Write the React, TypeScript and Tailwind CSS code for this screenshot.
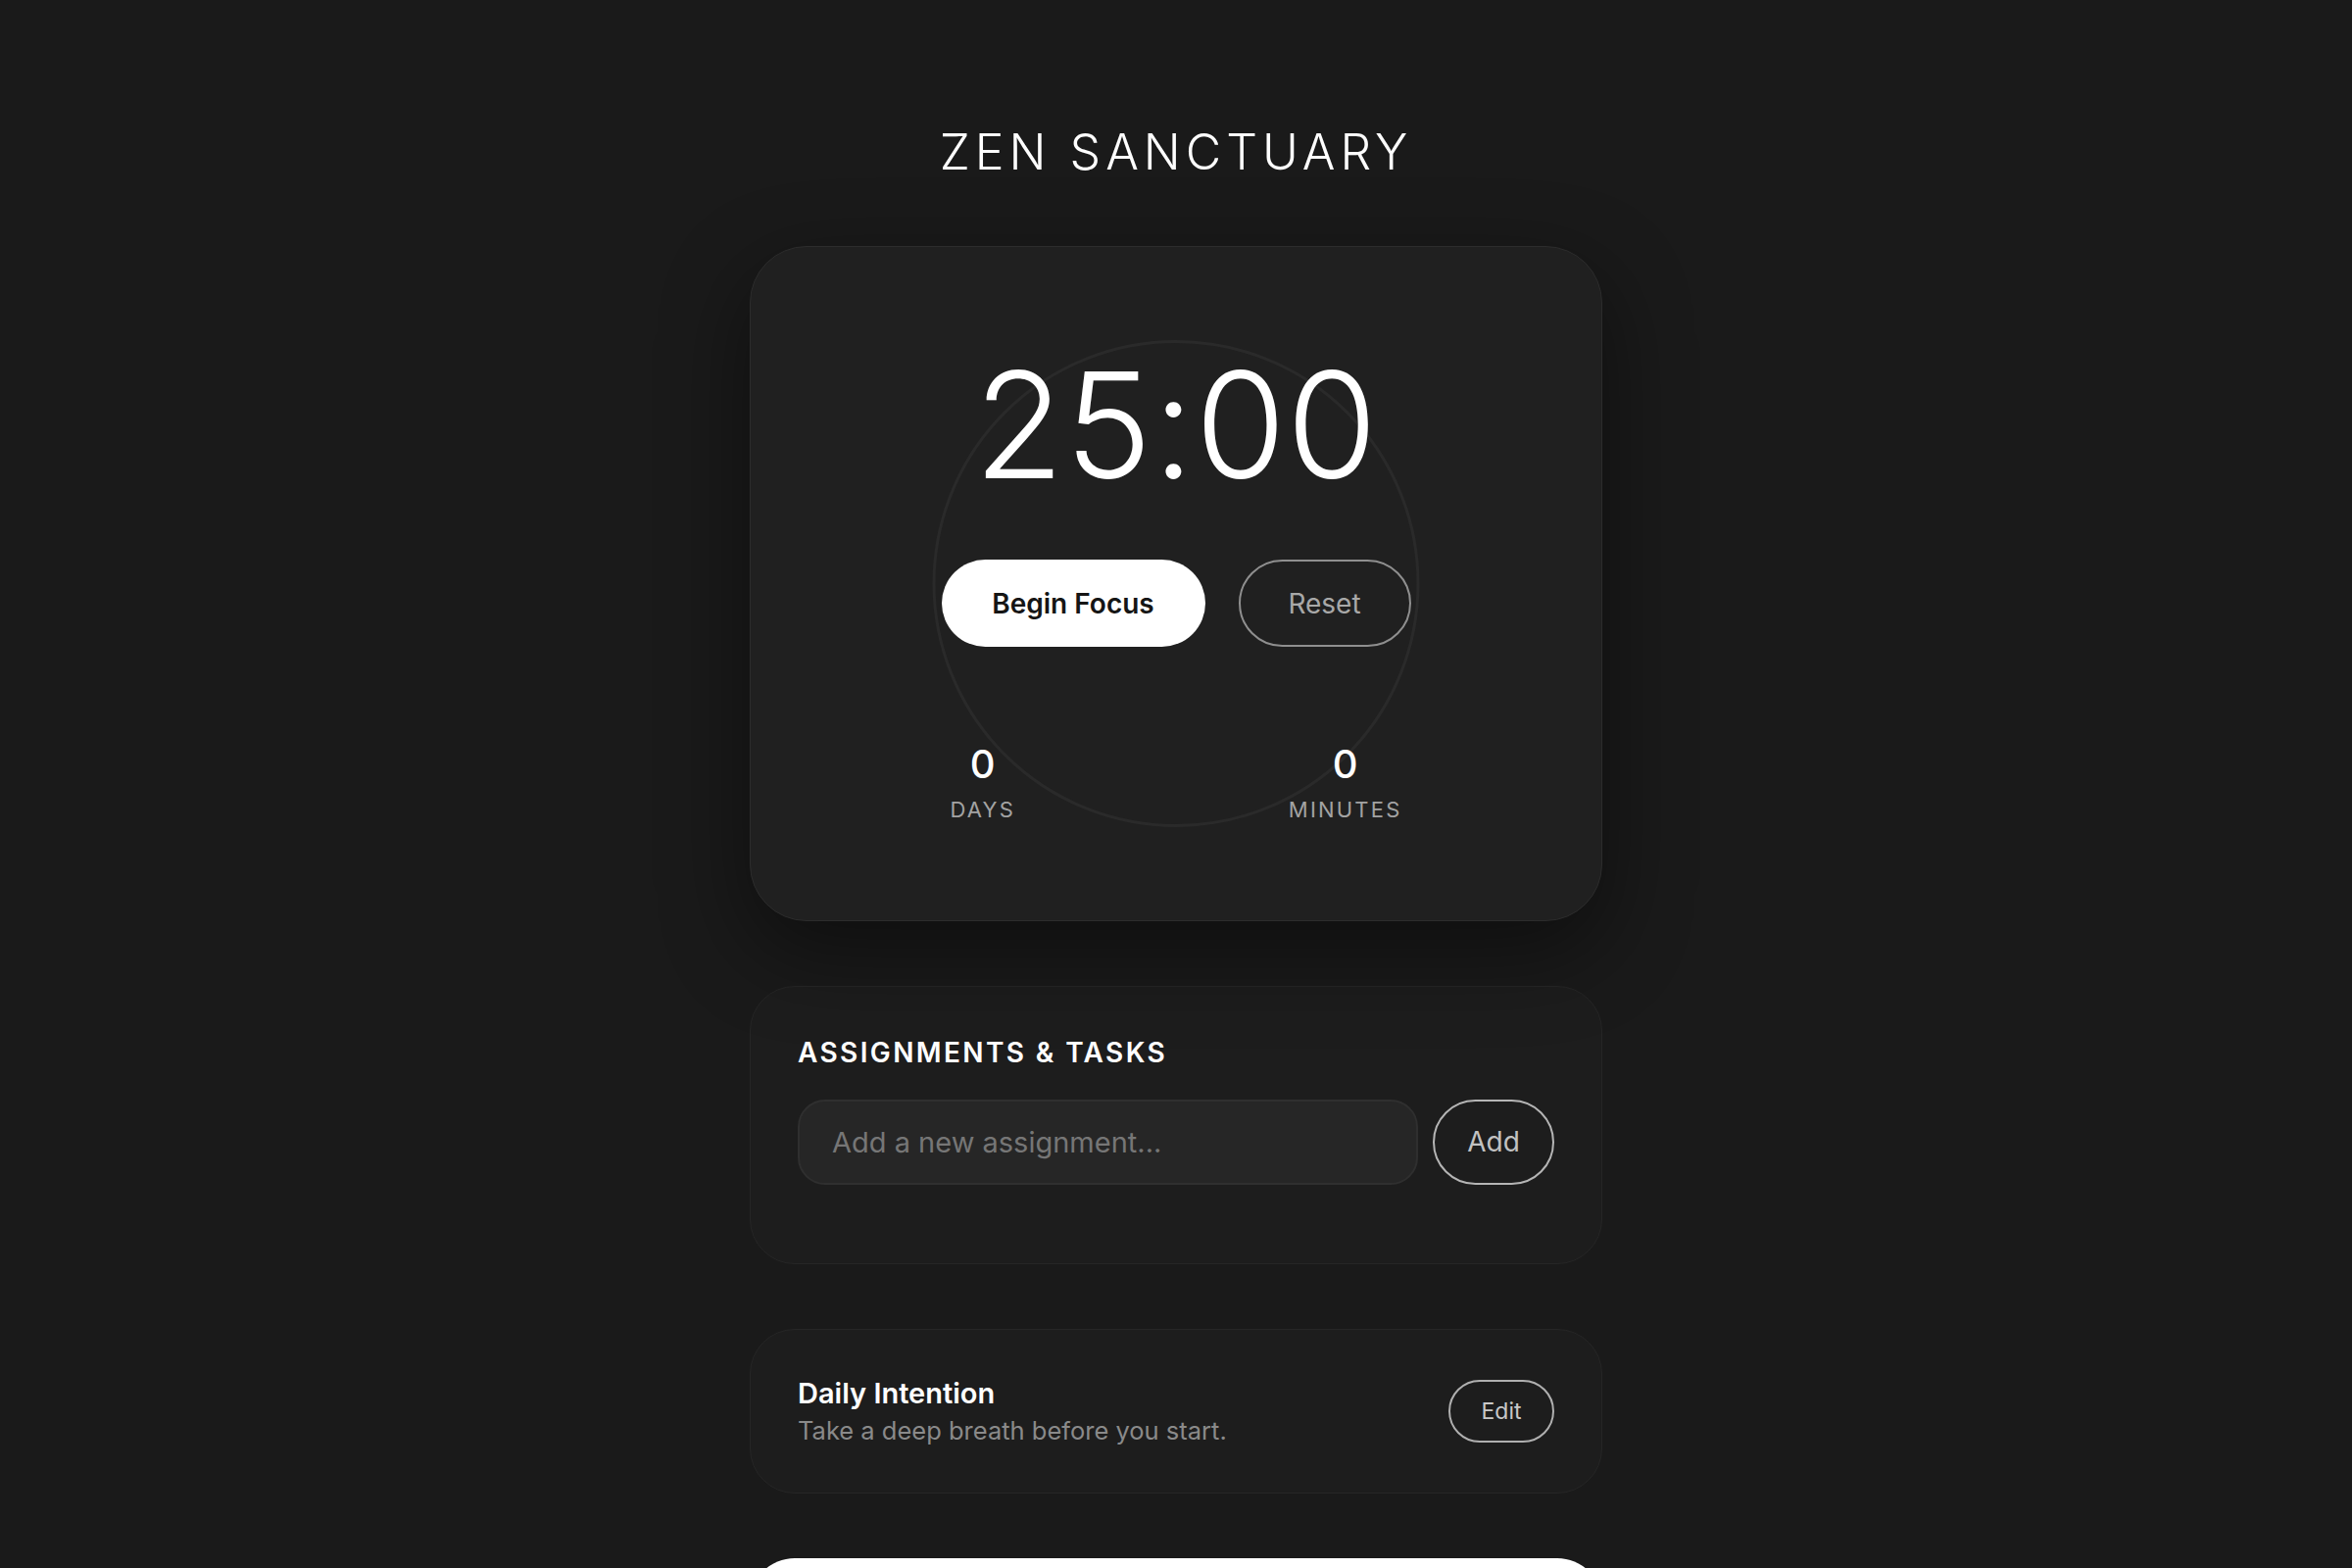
import React from "react";

const font = { fontFamily: "Inter, 'Noto Sans', sans-serif" };

function Stat({ value, label }: { value: number; label: string }) {
  return (
    <div className="flex flex-col items-center">
      <span className="text-[40px] leading-none font-medium text-white">
        {value}
      </span>
      <span className="mt-[13px] text-[22px] leading-[1.2] tracking-[0.1em] text-[#a3a3a3]">
        {label}
      </span>
    </div>
  );
}

function TimerCard() {
  return (
    <section className="relative rounded-[58px] border border-[#2c2c2c] bg-[#202020] pt-[107px] pb-[100px] shadow-[0_30px_90px_rgba(0,0,0,0.45)]">
      {/* progress ring */}
      <div className="pointer-events-none absolute left-1/2 top-[95px] h-[497px] w-[497px] -translate-x-1/2 rounded-full border-[3px] border-[#2a2a2a]" />
      <div className="relative flex flex-col items-center">
        <div className="text-[150px] leading-none font-light tracking-[0.005em] text-white">
          25:00
        </div>
        <div className="mt-[62px] flex gap-[34px]">
          <button className="h-[89px] w-[269px] rounded-full bg-white text-[28px] font-semibold text-[#151515]">
            Begin Focus
          </button>
          <button className="h-[89px] w-[176px] rounded-full border-2 border-[#8f8f8f] text-[28px] text-[#a8a8a8]">
            Reset
          </button>
        </div>
        <div className="mt-[100px] flex w-[461px] justify-between">
          <Stat value={0} label="DAYS" />
          <Stat value={0} label="MINUTES" />
        </div>
      </div>
    </section>
  );
}

function TasksCard() {
  return (
    <section className="rounded-[46px] border border-[#262626] bg-[#1d1d1d] px-[48px] pt-[51px] pb-[80px]">
      <h2 className="text-[28px] leading-[1.2] font-semibold tracking-[0.085em] text-white">
        ASSIGNMENTS &amp; TASKS
      </h2>
      <div className="mt-[30px] flex gap-[15px]">
        <input
          placeholder="Add a new assignment..."
          className="h-[87px] flex-1 rounded-[28px] border-2 border-[#2f2f2f] bg-[#262626] px-[33px] text-[29px] text-white outline-none placeholder:text-[#767676]"
        />
        <button className="h-[87px] w-[124px] rounded-full border-2 border-[#b5b5b5] text-[28px] text-[#c2c2c2]">
          Add
        </button>
      </div>
    </section>
  );
}

function IntentionCard() {
  return (
    <section className="flex items-center justify-between rounded-[46px] border border-[#262626] bg-[#1d1d1d] px-[48px] py-[48px]">
      <div className="flex flex-col gap-[5px]">
        <span className="text-[29px] leading-[1.2] font-semibold text-white">
          Daily Intention
        </span>
        <span className="text-[25.5px] leading-[1.2] text-[#8a8a8a]">
          Take a deep breath before you start.
        </span>
      </div>
      <button className="h-[64px] w-[108px] rounded-full border-2 border-[#b0b0b0] text-[23px] text-[#c8c8c8]">
        Edit
      </button>
    </section>
  );
}

export default function App() {
  return (
    <div
      className="flex min-h-screen flex-col items-center bg-[#1a1a1a] pt-[125px] pb-[80px]"
      style={font}
    >
      <h1 className="text-[50px] leading-[1.2] font-light tracking-[0.1em] text-white">
        ZEN SANCTUARY
      </h1>
      <main className="mt-[66px] flex w-[870px] flex-col gap-[66px]">
        <TimerCard />
        <TasksCard />
        <IntentionCard />
        <section className="h-[260px] rounded-[46px] bg-white" />
      </main>
    </div>
  );
}
